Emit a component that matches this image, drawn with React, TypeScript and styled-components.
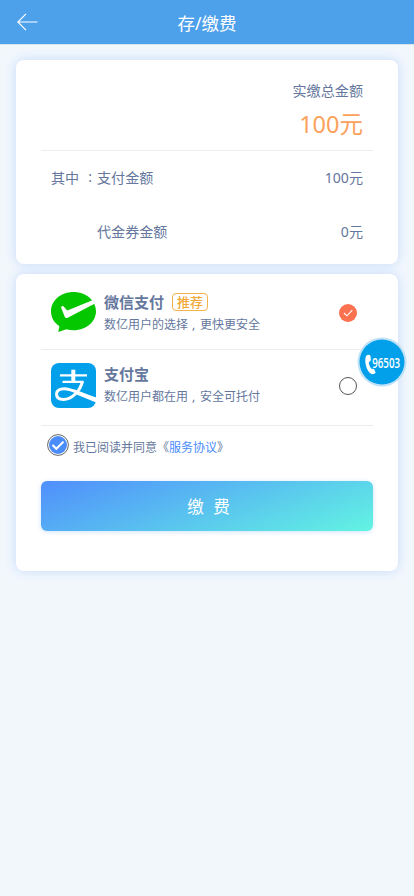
import React from 'react';
import styled, { createGlobalStyle } from 'styled-components';

const GlobalStyle = createGlobalStyle`
  * { box-sizing: border-box; }
  body {
    margin: 0;
    background: #f2f7fc;
    color: #65779d;
    font-family: "Noto Sans", "Noto Sans CJK SC", sans-serif;
    font-weight: 400;
  }
  svg { display: block; flex: none; }
`;

const Page = styled.div`
  position: relative;
  min-height: 896px;
`;

const Header = styled.header`
  display: grid;
  grid-template-columns: 56px 1fr 56px;
  align-items: center;
  height: 44px;
  background: #4da0ea;
  color: #fff;
  box-shadow: 0 1px 0 #d8e4ee;
`;

const BackButton = styled.button`
  padding: 0 0 0 17px;
  border: 0;
  background: none;
`;

const Title = styled.h1`
  margin: 0;
  padding-top: 2px;
  font-size: 17.5px;
  line-height: 26px;
  font-weight: 400;
  text-align: center;
`;

const Main = styled.main`
  display: flex;
  flex-direction: column;
  gap: 10px;
  padding: 16px 16px 0;
`;

const Card = styled.section<{ $height: number }>`
  height: ${(p) => p.$height}px;
  padding: 0 25px;
  border-radius: 8px;
  background: #fff;
  box-shadow: 0 0 12px #c4dafa;
`;

const Total = styled.div`
  display: flex;
  flex-direction: column;
  align-items: flex-end;
  height: 91px;
  padding: 20px 10px 0;
  border-bottom: 1px solid #ececf2;
`;

const TotalLabel = styled.div`
  font-size: 14.1px;
  line-height: 22px;
`;

const TotalValue = styled.div`
  margin-top: 4px;
  font-size: 23.5px;
  line-height: 36px;
  color: #fba15c;
`;

const AmountRow = styled.div`
  display: grid;
  grid-template-columns: 46px 1fr auto;
  align-items: center;
  height: 54px;
  padding: 0 10px 2px;
  font-size: 14.1px;
  white-space: nowrap;
`;

const Prefix = styled.span`
  display: flex;
  gap: 9px;
`;

const Method = styled.div<{ $height: number; $top: number }>`
  display: flex;
  align-items: flex-start;
  height: ${(p) => p.$height}px;
  padding: ${(p) => p.$top}px 16px 0 10px;
  border-bottom: 1px solid #ececf0;
`;

const MethodText = styled.div`
  flex: 1;
  margin-left: 8px;
`;

const MethodName = styled.div`
  display: flex;
  align-items: center;
  gap: 8px;
  height: 21px;
  font-size: 15px;
  font-weight: 700;
`;

const Tag = styled.span`
  display: flex;
  align-items: center;
  justify-content: center;
  width: 36px;
  height: 18px;
  border: 1px solid #f4b24d;
  border-radius: 4px;
  color: #f2a838;
  font-size: 13px;
  line-height: 16px;
  font-weight: 500;
`;

const MethodNote = styled.div`
  margin-top: 3px;
  font-size: 12px;
  line-height: 20px;
`;

const Comma = styled.span`
  display: inline-block;
  width: 12px;
  padding-left: 4px;
  white-space: nowrap;
`;

const Radio = styled.span<{ $checked?: boolean; $top: number }>`
  display: flex;
  align-items: center;
  justify-content: center;
  width: 18px;
  height: 18px;
  margin-top: ${(p) => p.$top}px;
  border: ${(p) => (p.$checked ? '0' : '1px solid #555')};
  border-radius: 50%;
  background: ${(p) => (p.$checked ? '#fb7250' : '#fff')};
`;

const Agreement = styled.div`
  display: flex;
  align-items: flex-start;
  gap: 4px;
  height: 39px;
  padding: 8px 0 0 6px;
  font-size: 12px;
`;

const AgreementText = styled.span`
  padding-top: 4px;
  line-height: 20px;
`;

const Link = styled.a`
  color: #4b8cfb;
`;

const PayButton = styled.button`
  display: block;
  width: 100%;
  height: 50px;
  margin-top: 16px;
  padding: 0 0 0 3px;
  border: 0;
  border-radius: 6px;
  background: linear-gradient(160deg, #508efc, #62f4e2);
  box-shadow: 0 1px 5px #cfe2fb;
  color: #fff;
  font: inherit;
  font-size: 16.5px;
  word-spacing: 5px;
`;

const Hotline = styled.a`
  position: absolute;
  top: 337px;
  left: 357px;
`;

const HotlineNumber = styled.text`
  font-family: "Open Sans", "Noto Sans", sans-serif;
  font-size: 15px;
  font-weight: 600;
`;

function WechatPayIcon() {
  return (
    <svg width="45" height="45" viewBox="0 0 45 45">
      <path fill="#04c700" d="M22.5 1C10 1 0 9.500 0 20.200c0 6.500 3.300 11.500 8.400 15L7.200 41 15.500 38.300c2.200.6 4.500.9 7 .9C35 39.200 45 30.800 45 20.200 45 9.500 35 1 22.500 1z" />
      <path fill="#fff" d="M10 16.200c.8-1.400 2-1.600 2.600-.8l3.700 4.200L42 9l2 3.500L17.200 26.600c-1.700.9-2.900.6-3.500-.8z" />
    </svg>
  );
}

function AlipayIcon() {
  return (
    <svg width="45" height="45" viewBox="0 0 45 45">
      <rect width="45" height="45" rx="8" fill="#02a0ea" />
      <g fill="none" stroke="#fff">
        <path strokeWidth="2.200" d="M9 12.300H36M11.500 18.900H32.500" />
        <path strokeWidth="4" d="M22.300 6.700V19" />
        <path strokeWidth="3" d="M31.500 18.300C29 28 21 36.500 12.500 36.500 7.300 36.500 5.500 33.800 5.500 31c0-3.300 3.500-5.300 7.500-5.300 7.500 0 14 4.300 31.500 10.300" />
      </g>
      <path fill="#fff" d="M27 29.500 45 34.500V39.500L25.500 31.500z" />
    </svg>
  );
}

export default function App() {
  return (
    <Page>
      <GlobalStyle />
      <Header>
        <BackButton aria-label="返回">
          <svg width="21" height="18" viewBox="0 0 21 18" fill="none" stroke="#fff" strokeWidth="1.200">
            <path d="M9 .8.8 9 9 17.200M.8 9H20.500" />
          </svg>
        </BackButton>
        <Title>存/缴费</Title>
      </Header>
      <Main>
        <Card $height={204}>
          <Total>
            <TotalLabel>实缴总金额</TotalLabel>
            <TotalValue>100元</TotalValue>
          </Total>
          <AmountRow>
            <Prefix><span>其中</span><span>:</span></Prefix>
            <span>支付金额</span>
            <span>100元</span>
          </AmountRow>
          <AmountRow>
            <span />
            <span>代金券金额</span>
            <span>0元</span>
          </AmountRow>
        </Card>
        <Card $height={297}>
          <Method $height={76} $top={17}>
            <WechatPayIcon />
            <MethodText>
              <MethodName>微信支付<Tag>推荐</Tag></MethodName>
              <MethodNote>数亿用户的选择<Comma>,</Comma>更快更安全</MethodNote>
            </MethodText>
            <Radio $checked $top={13}>
              <svg width="10" height="8" viewBox="0 0 10 8" fill="none" stroke="#fff" strokeWidth="1.100">
                <path d="M1 4 4 6.800 9.300 1.200" />
              </svg>
            </Radio>
          </Method>
          <Method $height={76} $top={13}>
            <AlipayIcon />
            <MethodText>
              <MethodName>支付宝</MethodName>
              <MethodNote>数亿用户都在用<Comma>,</Comma>安全可托付</MethodNote>
            </MethodText>
            <Radio $top={14} />
          </Method>
          <Agreement>
            <svg width="22" height="22" viewBox="0 0 22 22" fill="none">
              <circle cx="11" cy="11" r="10.400" fill="#fff" stroke="#666" />
              <circle cx="11" cy="11" r="9" fill="#4b8cfb" />
              <path d="M5.500 11 9.300 14.800 16.500 7.600" stroke="#fff" strokeWidth="2" />
            </svg>
            <AgreementText>我已阅读并同意《<Link>服务协议</Link>》</AgreementText>
          </Agreement>
          <PayButton>缴 费</PayButton>
        </Card>
      </Main>
      <Hotline aria-label="96503">
        <svg width="50" height="50" viewBox="0 0 50 50">
          <circle cx="25" cy="25" r="24.500" fill="#bfe2f7" />
          <circle cx="25" cy="25" r="22.500" fill="#02a0ea" />
          <path fill="#fff" d="M9 19c1.500-1.500 3.700-1.600 4.400-.3l.5 4.300c-.2 1.200-1.400 1.700-2.100 2.200.2 2.700 1.200 4.900 2.800 6.800 1-.4 2-.5 2.700.4l1.300 3.200c-1 1.500-3 2-4.600 1.100C9.700 34 6.900 25 9 19z" />
          <HotlineNumber transform="translate(15.200 30.500) scale(.65 1)" fill="#fff">96503</HotlineNumber>
        </svg>
      </Hotline>
    </Page>
  );
}
